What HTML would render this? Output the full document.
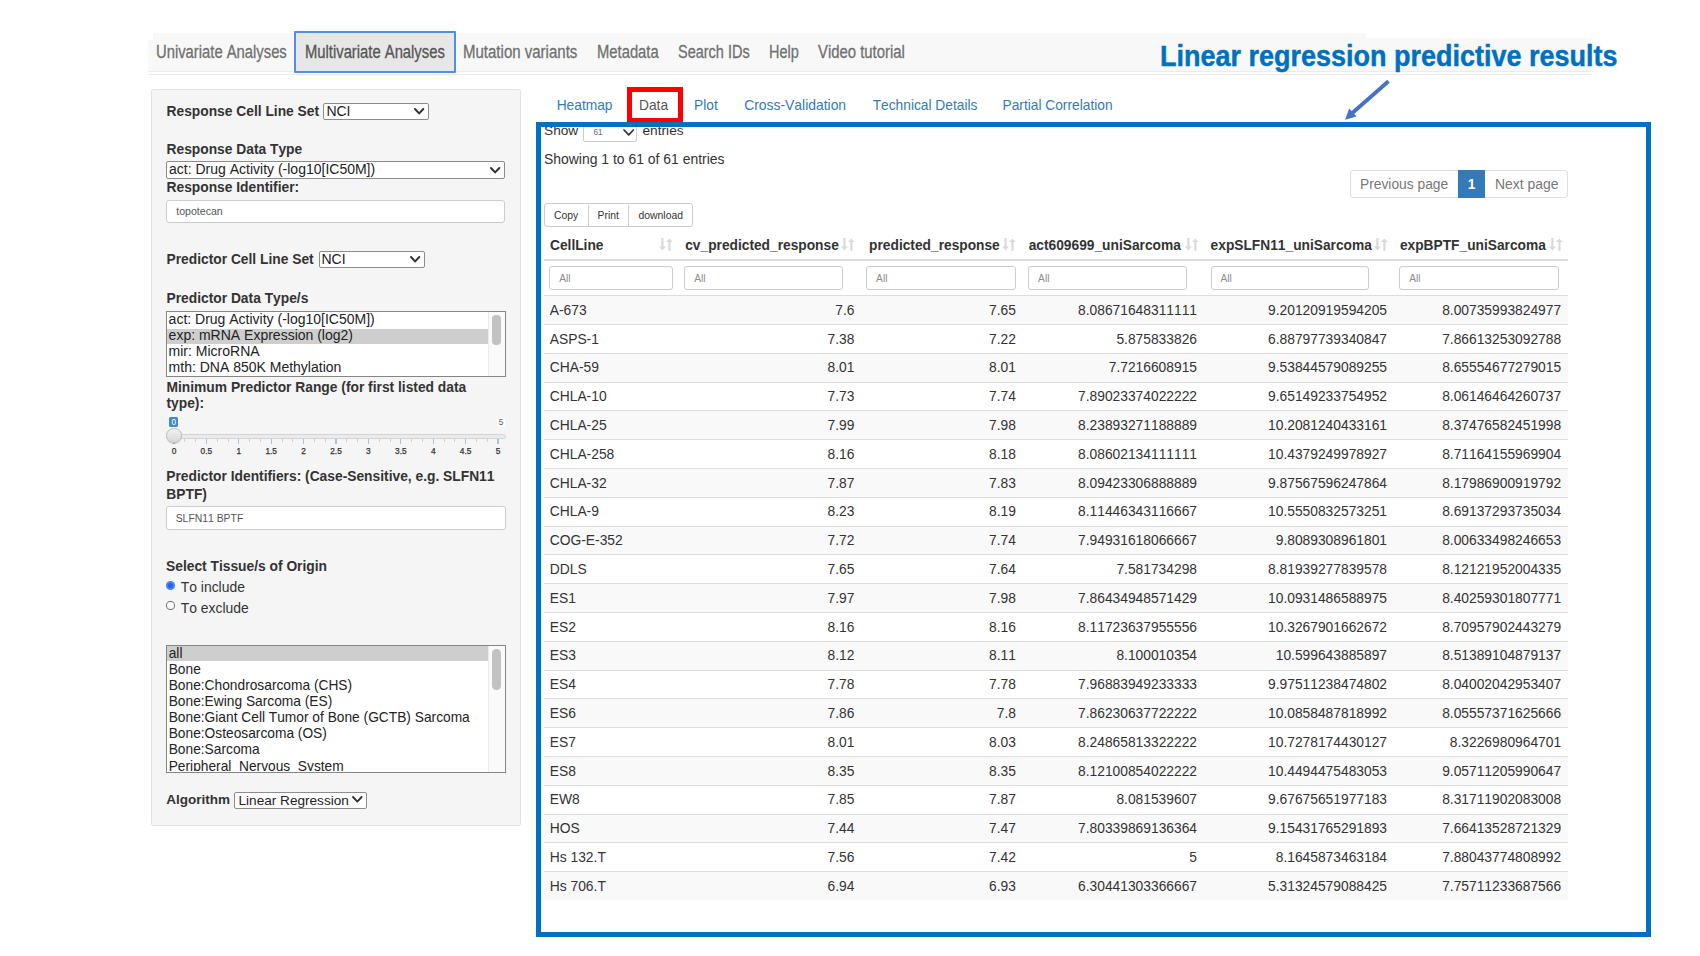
<!DOCTYPE html>
<html><head><meta charset="utf-8"><title>Linear regression predictive results</title>
<style>
html,body{margin:0;padding:0;background:#fff;}
body{width:1700px;height:956px;position:relative;overflow:hidden;font-family:"Liberation Sans",sans-serif;}
.t{position:absolute;white-space:pre;line-height:0;font-family:"Liberation Sans",sans-serif;font-kerning:none;}
.r{position:absolute;}
</style></head><body>
<div class="r" style="left:153.30px;top:33.30px;width:1438.20px;height:37.30px;background:#f8f8f8;"></div>
<div class="r" style="left:148.20px;top:39.60px;width:5.10px;height:31.00px;background:#f8f8f8;"></div>
<div class="r" style="left:148.20px;top:70.60px;width:1443.30px;height:1.40px;background:#ebebeb;"></div>
<div class="r" style="left:148.20px;top:74.00px;width:1443.30px;height:1.20px;background:#e9e9e9;"></div>
<div class="r" style="left:1366.00px;top:32.00px;width:226.00px;height:6.20px;background:#fff;"></div>
<div class="r" style="left:293.50px;top:31.40px;width:162.50px;height:41.20px;background:#e7e7e7;border:2px solid #4f8fe6;box-sizing:border-box;border-radius:1px;"></div>
<div class="t" style="left:156.40px;top:52.00px;font-size:18px;color:#707070;font-weight:400;transform:scaleX(0.822);transform-origin:left;-webkit-text-stroke:0.3px #707070;">Univariate Analyses</div>
<div class="t" style="left:305.30px;top:52.00px;font-size:18px;color:#555;font-weight:400;transform:scaleX(0.822);transform-origin:left;-webkit-text-stroke:0.3px #555;">Multivariate Analyses</div>
<div class="t" style="left:463.40px;top:52.00px;font-size:18px;color:#707070;font-weight:400;transform:scaleX(0.834);transform-origin:left;-webkit-text-stroke:0.3px #707070;">Mutation variants</div>
<div class="t" style="left:596.80px;top:52.00px;font-size:18px;color:#707070;font-weight:400;transform:scaleX(0.822);transform-origin:left;-webkit-text-stroke:0.3px #707070;">Metadata</div>
<div class="t" style="left:678.00px;top:52.00px;font-size:18px;color:#707070;font-weight:400;transform:scaleX(0.805);transform-origin:left;-webkit-text-stroke:0.3px #707070;">Search IDs</div>
<div class="t" style="left:769.40px;top:52.00px;font-size:18px;color:#707070;font-weight:400;transform:scaleX(0.805);transform-origin:left;-webkit-text-stroke:0.3px #707070;">Help</div>
<div class="t" style="left:818.10px;top:52.00px;font-size:18px;color:#707070;font-weight:400;transform:scaleX(0.827);transform-origin:left;-webkit-text-stroke:0.3px #707070;">Video tutorial</div>
<div class="t" style="left:1159.60px;top:56.00px;font-size:29px;color:#0070c0;font-weight:700;transform:scaleX(0.930447467990259);transform-origin:left;-webkit-text-stroke:0.45px #0070c0;">Linear regression predictive results</div>
<svg class="r" style="left:0;top:0" width="1700" height="956"><line x1="1388.5" y1="81.3" x2="1349.5" y2="115.5" stroke="#4472c4" stroke-width="3.8"/><polygon points="1345.1,119.8 1349.2,108.6 1356.6,116.6" fill="#4472c4"/></svg>
<div class="r" style="left:150.50px;top:89.20px;width:370.30px;height:736.80px;background:#f5f5f5;border:1px solid #e1e1e1;box-sizing:border-box;border-radius:2.5px;"></div>
<div class="t" style="left:166.50px;top:112.00px;font-size:13.8px;color:#333;font-weight:700;">Response Cell Line Set</div>
<div class="r" style="left:323.40px;top:103.20px;width:105.70px;height:16.80px;background:#fff;border:1px solid #8c8c8c;box-sizing:border-box;border-radius:2px;"></div>
<div class="t" style="left:326.40px;top:111.00px;font-size:14.0px;color:#222;font-weight:400;">NCI</div>
<svg class="r" style="left:413.15px;top:106.70px" width="12.30" height="8.40"><polyline points="2,2 6.15,6.40 10.30,2" fill="none" stroke="#333" stroke-width="2" stroke-linecap="round" stroke-linejoin="round"/></svg>
<div class="t" style="left:166.50px;top:150.00px;font-size:13.8px;color:#333;font-weight:700;">Response Data Type</div>
<div class="r" style="left:166.20px;top:161.10px;width:339.20px;height:17.80px;background:#fff;border:1px solid #8c8c8c;box-sizing:border-box;border-radius:2px;"></div>
<div class="t" style="left:169.00px;top:169.00px;font-size:14.0px;color:#222;font-weight:400;">act: Drug Activity (-log10[IC50M])</div>
<svg class="r" style="left:489.25px;top:165.80px" width="12.30" height="8.40"><polyline points="2,2 6.15,6.40 10.30,2" fill="none" stroke="#333" stroke-width="2" stroke-linecap="round" stroke-linejoin="round"/></svg>
<div class="t" style="left:166.50px;top:188.00px;font-size:13.8px;color:#333;font-weight:700;">Response Identifier:</div>
<div class="r" style="left:166.20px;top:200.10px;width:339.20px;height:22.90px;background:#fff;border:1px solid #ccc;box-sizing:border-box;border-radius:3px;"></div>
<div class="t" style="left:176.20px;top:211.00px;font-size:10.6px;color:#555;font-weight:400;">topotecan</div>
<div class="t" style="left:166.50px;top:260.00px;font-size:13.8px;color:#333;font-weight:700;">Predictor Cell Line Set</div>
<div class="r" style="left:318.50px;top:251.30px;width:106.20px;height:17.00px;background:#fff;border:1px solid #8c8c8c;box-sizing:border-box;border-radius:2px;"></div>
<div class="t" style="left:321.50px;top:259.00px;font-size:14.0px;color:#222;font-weight:400;">NCI</div>
<svg class="r" style="left:408.65px;top:254.80px" width="12.30" height="8.40"><polyline points="2,2 6.15,6.40 10.30,2" fill="none" stroke="#333" stroke-width="2" stroke-linecap="round" stroke-linejoin="round"/></svg>
<div class="t" style="left:166.50px;top:299.00px;font-size:13.8px;color:#333;font-weight:700;">Predictor Data Type/s</div>
<div class="r" style="left:166.00px;top:311.00px;width:340.00px;height:66.00px;background:#fff;border:1px solid #858585;box-sizing:border-box;"></div>
<div class="r" style="left:167.00px;top:328.50px;width:321.00px;height:15.20px;background:#cecece;"></div>
<div class="r" style="left:488.00px;top:312.00px;width:17.00px;height:64.00px;background:#fafafa;border-left:1px solid #ebebeb;box-sizing:border-box;"></div>
<div class="r" style="left:492.20px;top:315.00px;width:8.60px;height:29.80px;background:#c2c2c2;border-radius:4px;"></div>
<div class="t" style="left:168.60px;top:319.00px;font-size:14.0px;color:#222;font-weight:400;">act: Drug Activity (-log10[IC50M])</div>
<div class="t" style="left:168.60px;top:335.00px;font-size:14.0px;color:#222;font-weight:400;">exp: mRNA Expression (log2)</div>
<div class="t" style="left:168.60px;top:351.00px;font-size:14.0px;color:#222;font-weight:400;">mir: MicroRNA</div>
<div class="t" style="left:168.60px;top:367.00px;font-size:14.0px;color:#222;font-weight:400;">mth: DNA 850K Methylation</div>
<div class="t" style="left:166.50px;top:388.00px;font-size:13.8px;color:#333;font-weight:700;">Minimum Predictor Range (for first listed data</div>
<div class="t" style="left:166.50px;top:404.00px;font-size:13.8px;color:#333;font-weight:700;">type):</div>
<div class="r" style="left:169.30px;top:416.60px;width:9.00px;height:10.00px;background:#428bca;border-radius:1.5px;"></div>
<div class="t" style="left:169.30px;top:423.00px;font-size:8.2px;color:#fff;font-weight:400;width:9px;text-align:center;">0</div>
<div class="r" style="left:497.00px;top:417.50px;width:8.30px;height:9.50px;background:#fff;border-radius:1.5px;"></div>
<div class="t" style="left:497.00px;top:423.00px;font-size:8.2px;color:#555;font-weight:400;width:8.3px;text-align:center;">5</div>
<div class="r" style="left:166.50px;top:434.10px;width:339.00px;height:4.70px;background:#ebebeb;border:1px solid #d4d4d4;box-sizing:border-box;border-radius:3px;"></div>
<div class="r" style="left:173.40px;top:438.60px;width:1.20px;height:5.20px;background:#a9c2da;"></div>
<div class="r" style="left:184.30px;top:438.60px;width:1.00px;height:3.00px;background:#cfcfcf;"></div>
<div class="r" style="left:195.10px;top:438.60px;width:1.00px;height:3.00px;background:#cfcfcf;"></div>
<div class="r" style="left:205.80px;top:438.60px;width:1.20px;height:5.20px;background:#a9c2da;"></div>
<div class="r" style="left:216.70px;top:438.60px;width:1.00px;height:3.00px;background:#cfcfcf;"></div>
<div class="r" style="left:227.50px;top:438.60px;width:1.00px;height:3.00px;background:#cfcfcf;"></div>
<div class="r" style="left:238.20px;top:438.60px;width:1.20px;height:5.20px;background:#a9c2da;"></div>
<div class="r" style="left:249.10px;top:438.60px;width:1.00px;height:3.00px;background:#cfcfcf;"></div>
<div class="r" style="left:259.90px;top:438.60px;width:1.00px;height:3.00px;background:#cfcfcf;"></div>
<div class="r" style="left:270.60px;top:438.60px;width:1.20px;height:5.20px;background:#a9c2da;"></div>
<div class="r" style="left:281.50px;top:438.60px;width:1.00px;height:3.00px;background:#cfcfcf;"></div>
<div class="r" style="left:292.30px;top:438.60px;width:1.00px;height:3.00px;background:#cfcfcf;"></div>
<div class="r" style="left:303.00px;top:438.60px;width:1.20px;height:5.20px;background:#a9c2da;"></div>
<div class="r" style="left:313.90px;top:438.60px;width:1.00px;height:3.00px;background:#cfcfcf;"></div>
<div class="r" style="left:324.70px;top:438.60px;width:1.00px;height:3.00px;background:#cfcfcf;"></div>
<div class="r" style="left:335.40px;top:438.60px;width:1.20px;height:5.20px;background:#a9c2da;"></div>
<div class="r" style="left:346.30px;top:438.60px;width:1.00px;height:3.00px;background:#cfcfcf;"></div>
<div class="r" style="left:357.10px;top:438.60px;width:1.00px;height:3.00px;background:#cfcfcf;"></div>
<div class="r" style="left:367.80px;top:438.60px;width:1.20px;height:5.20px;background:#a9c2da;"></div>
<div class="r" style="left:378.70px;top:438.60px;width:1.00px;height:3.00px;background:#cfcfcf;"></div>
<div class="r" style="left:389.50px;top:438.60px;width:1.00px;height:3.00px;background:#cfcfcf;"></div>
<div class="r" style="left:400.20px;top:438.60px;width:1.20px;height:5.20px;background:#a9c2da;"></div>
<div class="r" style="left:411.10px;top:438.60px;width:1.00px;height:3.00px;background:#cfcfcf;"></div>
<div class="r" style="left:421.90px;top:438.60px;width:1.00px;height:3.00px;background:#cfcfcf;"></div>
<div class="r" style="left:432.60px;top:438.60px;width:1.20px;height:5.20px;background:#a9c2da;"></div>
<div class="r" style="left:443.50px;top:438.60px;width:1.00px;height:3.00px;background:#cfcfcf;"></div>
<div class="r" style="left:454.30px;top:438.60px;width:1.00px;height:3.00px;background:#cfcfcf;"></div>
<div class="r" style="left:465.00px;top:438.60px;width:1.20px;height:5.20px;background:#a9c2da;"></div>
<div class="r" style="left:475.90px;top:438.60px;width:1.00px;height:3.00px;background:#cfcfcf;"></div>
<div class="r" style="left:486.70px;top:438.60px;width:1.00px;height:3.00px;background:#cfcfcf;"></div>
<div class="r" style="left:497.40px;top:438.60px;width:1.20px;height:5.20px;background:#a9c2da;"></div>
<div class="t" style="left:159.00px;top:451.00px;font-size:8.3px;color:#333;font-weight:400;width:30px;text-align:center;-webkit-text-stroke:0.25px #333;">0</div>
<div class="t" style="left:191.40px;top:451.00px;font-size:8.3px;color:#333;font-weight:400;width:30px;text-align:center;-webkit-text-stroke:0.25px #333;">0.5</div>
<div class="t" style="left:223.80px;top:451.00px;font-size:8.3px;color:#333;font-weight:400;width:30px;text-align:center;-webkit-text-stroke:0.25px #333;">1</div>
<div class="t" style="left:256.20px;top:451.00px;font-size:8.3px;color:#333;font-weight:400;width:30px;text-align:center;-webkit-text-stroke:0.25px #333;">1.5</div>
<div class="t" style="left:288.60px;top:451.00px;font-size:8.3px;color:#333;font-weight:400;width:30px;text-align:center;-webkit-text-stroke:0.25px #333;">2</div>
<div class="t" style="left:321.00px;top:451.00px;font-size:8.3px;color:#333;font-weight:400;width:30px;text-align:center;-webkit-text-stroke:0.25px #333;">2.5</div>
<div class="t" style="left:353.40px;top:451.00px;font-size:8.3px;color:#333;font-weight:400;width:30px;text-align:center;-webkit-text-stroke:0.25px #333;">3</div>
<div class="t" style="left:385.80px;top:451.00px;font-size:8.3px;color:#333;font-weight:400;width:30px;text-align:center;-webkit-text-stroke:0.25px #333;">3.5</div>
<div class="t" style="left:418.20px;top:451.00px;font-size:8.3px;color:#333;font-weight:400;width:30px;text-align:center;-webkit-text-stroke:0.25px #333;">4</div>
<div class="t" style="left:450.60px;top:451.00px;font-size:8.3px;color:#333;font-weight:400;width:30px;text-align:center;-webkit-text-stroke:0.25px #333;">4.5</div>
<div class="t" style="left:483.00px;top:451.00px;font-size:8.3px;color:#333;font-weight:400;width:30px;text-align:center;-webkit-text-stroke:0.25px #333;">5</div>
<div class="r" style="left:166.00px;top:427.50px;width:15.80px;height:15.80px;background:linear-gradient(#f2f2f2,#d8d8d8);border:1px solid #bdbdbd;box-sizing:border-box;border-radius:50%;box-shadow:0 1px 1px rgba(0,0,0,.15);"></div>
<div class="t" style="left:166.30px;top:477.00px;font-size:13.8px;color:#333;font-weight:700;">Predictor Identifiers: (Case-Sensitive, e.g. SLFN11</div>
<div class="t" style="left:166.30px;top:495.00px;font-size:13.8px;color:#333;font-weight:700;">BPTF)</div>
<div class="r" style="left:166.30px;top:505.90px;width:339.50px;height:24.20px;background:#fff;border:1px solid #ccc;box-sizing:border-box;border-radius:3px;"></div>
<div class="t" style="left:175.70px;top:519.00px;font-size:10.4px;color:#555;font-weight:400;">SLFN11 BPTF</div>
<div class="t" style="left:166.00px;top:567.00px;font-size:13.8px;color:#333;font-weight:700;">Select Tissue/s of Origin</div>
<div class="r" style="left:166.10px;top:581.10px;width:8.80px;height:8.60px;background:radial-gradient(circle,#2a64e6 0 2.2px,#4a86f2 3.2px);border-radius:50%;"></div>
<div class="r" style="left:166.10px;top:601.40px;width:8.80px;height:8.50px;background:#fafafa;border:1.2px solid #707070;box-sizing:border-box;border-radius:50%;"></div>
<div class="t" style="left:180.80px;top:587.00px;font-size:13.9px;color:#333;font-weight:400;">To include</div>
<div class="t" style="left:180.80px;top:608.00px;font-size:13.9px;color:#333;font-weight:400;">To exclude</div>
<div class="r" style="left:166.00px;top:645.00px;width:340.00px;height:128.00px;background:#fff;border:1px solid #858585;box-sizing:border-box;"></div>
<div class="r" style="left:167.00px;top:646.00px;width:321.00px;height:15.00px;background:#cecece;"></div>
<div class="r" style="left:488.00px;top:646.00px;width:17.00px;height:126.00px;background:#fafafa;border-left:1px solid #ebebeb;box-sizing:border-box;"></div>
<div class="r" style="left:492.20px;top:648.60px;width:8.60px;height:41.40px;background:#c2c2c2;border-radius:4.3px;"></div>
<div class="r" style="left:167.3px;top:646.2px;width:320px;height:125.3px;overflow:hidden">
<div class="t" style="left:1.4px;top:7.80px;font-size:13.75px;color:#222">all</div>
<div class="t" style="left:1.4px;top:23.80px;font-size:13.75px;color:#222">Bone</div>
<div class="t" style="left:1.4px;top:39.80px;font-size:13.75px;color:#222">Bone:Chondrosarcoma (CHS)</div>
<div class="t" style="left:1.4px;top:55.80px;font-size:13.75px;color:#222">Bone:Ewing Sarcoma (ES)</div>
<div class="t" style="left:1.4px;top:71.80px;font-size:13.75px;color:#222">Bone:Giant Cell Tumor of Bone (GCTB) Sarcoma</div>
<div class="t" style="left:1.4px;top:87.80px;font-size:13.75px;color:#222">Bone:Osteosarcoma (OS)</div>
<div class="t" style="left:1.4px;top:103.80px;font-size:13.75px;color:#222">Bone:Sarcoma</div>
<div class="t" style="left:1.4px;top:120.80px;font-size:13.75px;color:#222">Peripheral_Nervous_System</div>
</div>
<div class="t" style="left:166.20px;top:800.00px;font-size:13.5px;color:#333;font-weight:700;">Algorithm</div>
<div class="r" style="left:234.20px;top:791.50px;width:132.80px;height:17.00px;background:#fff;border:1px solid #8c8c8c;box-sizing:border-box;border-radius:2px;"></div>
<div class="t" style="left:238.50px;top:801.00px;font-size:13.6px;color:#222;font-weight:400;">Linear Regression</div>
<svg class="r" style="left:350.80px;top:795.30px" width="12.60" height="8.60"><polyline points="2,2 6.30,6.60 10.60,2" fill="none" stroke="#333" stroke-width="1.9" stroke-linecap="round" stroke-linejoin="round"/></svg>
<div class="t" style="left:556.70px;top:106.00px;font-size:13.75px;color:#337ab7;font-weight:400;">Heatmap</div>
<div class="t" style="left:639.00px;top:106.00px;font-size:13.75px;color:#555;font-weight:400;">Data</div>
<div class="t" style="left:694.10px;top:106.00px;font-size:13.75px;color:#337ab7;font-weight:400;">Plot</div>
<div class="t" style="left:744.20px;top:105.00px;font-size:13.9px;color:#337ab7;font-weight:400;">Cross-Validation</div>
<div class="t" style="left:872.70px;top:106.00px;font-size:13.75px;color:#337ab7;font-weight:400;">Technical Details</div>
<div class="t" style="left:1002.50px;top:106.00px;font-size:13.75px;color:#337ab7;font-weight:400;">Partial Correlation</div>
<div class="t" style="left:544.00px;top:131.00px;font-size:13.7px;color:#333;font-weight:400;">Show</div>
<div class="r" style="left:583.30px;top:124.00px;width:54.10px;height:18.20px;background:#fff;border:1px solid #ccc;box-sizing:border-box;border-radius:2px;"></div>
<div class="t" style="left:593.40px;top:133.00px;font-size:8.2px;color:#666;font-weight:400;">61</div>
<svg class="r" style="left:621.50px;top:128.30px" width="13.40" height="8.80"><polyline points="2,2 6.70,6.80 11.40,2" fill="none" stroke="#333" stroke-width="1.7" stroke-linecap="round" stroke-linejoin="round"/></svg>
<div class="t" style="left:642.50px;top:131.00px;font-size:13.7px;color:#333;font-weight:400;">entries</div>
<div class="r" style="left:627.30px;top:86.80px;width:55.50px;height:35.80px;border:5px solid #f00;box-sizing:border-box;"></div>
<div class="t" style="left:544.00px;top:159.00px;font-size:13.95px;color:#333;font-weight:400;">Showing 1 to 61 of 61 entries</div>
<div class="r" style="left:1349.90px;top:170.40px;width:218.50px;height:27.30px;background:#fff;border:1px solid #ddd;box-sizing:border-box;border-radius:3px;"></div>
<div class="r" style="left:1457.60px;top:170.20px;width:27.80px;height:27.60px;background:#337ab7;"></div>
<div class="t" style="left:1360.00px;top:185.00px;font-size:13.8px;color:#777;font-weight:400;">Previous page</div>
<div class="t" style="left:1457.60px;top:185.00px;font-size:13.8px;color:#fff;font-weight:700;width:27.8px;text-align:center;">1</div>
<div class="t" style="left:1495.00px;top:184.00px;font-size:13.95px;color:#777;font-weight:400;">Next page</div>
<div class="r" style="left:544.20px;top:203.30px;width:149.20px;height:23.70px;background:#fff;border:1px solid #ccc;box-sizing:border-box;border-radius:3px;"></div>
<div class="r" style="left:587.60px;top:204.50px;width:1.20px;height:21.50px;background:#ccc;"></div>
<div class="r" style="left:628.00px;top:204.50px;width:1.20px;height:21.50px;background:#ccc;"></div>
<div class="t" style="left:554.00px;top:216.00px;font-size:10.4px;color:#333;font-weight:400;">Copy</div>
<div class="t" style="left:597.50px;top:216.00px;font-size:10.4px;color:#333;font-weight:400;">Print</div>
<div class="t" style="left:638.50px;top:216.00px;font-size:10.4px;color:#333;font-weight:400;">download</div>
<div class="t" style="left:550.00px;top:246.00px;font-size:13.75px;color:#333;font-weight:700;">CellLine</div>
<svg class="r" style="left:658.60px;top:236px" width="14" height="17"><g fill="#dadada"><rect x="2.3" y="2" width="2.2" height="10.5"/><polygon points="0,10.5 6.8,10.5 3.4,14.6"/><rect x="9.3" y="5.2" width="2.2" height="9.6"/><polygon points="6.9,6.1 13.9,6.1 10.4,2.4"/></g></svg>
<div class="r" style="left:549.30px;top:266.10px;width:123.30px;height:23.90px;background:#fff;border:1px solid #ccc;box-sizing:border-box;border-radius:3px;"></div>
<div class="t" style="left:559.20px;top:279.00px;font-size:10.2px;color:#8c8c8c;font-weight:400;">All</div>
<div class="t" style="left:685.20px;top:246.00px;font-size:13.75px;color:#333;font-weight:700;">cv_predicted_response</div>
<svg class="r" style="left:840.70px;top:236px" width="14" height="17"><g fill="#dadada"><rect x="2.3" y="2" width="2.2" height="10.5"/><polygon points="0,10.5 6.8,10.5 3.4,14.6"/><rect x="9.3" y="5.2" width="2.2" height="9.6"/><polygon points="6.9,6.1 13.9,6.1 10.4,2.4"/></g></svg>
<div class="r" style="left:684.30px;top:266.10px;width:158.80px;height:23.90px;background:#fff;border:1px solid #ccc;box-sizing:border-box;border-radius:3px;"></div>
<div class="t" style="left:694.20px;top:279.00px;font-size:10.2px;color:#8c8c8c;font-weight:400;">All</div>
<div class="t" style="left:869.10px;top:246.00px;font-size:13.75px;color:#333;font-weight:700;">predicted_response</div>
<svg class="r" style="left:1002.40px;top:236px" width="14" height="17"><g fill="#dadada"><rect x="2.3" y="2" width="2.2" height="10.5"/><polygon points="0,10.5 6.8,10.5 3.4,14.6"/><rect x="9.3" y="5.2" width="2.2" height="9.6"/><polygon points="6.9,6.1 13.9,6.1 10.4,2.4"/></g></svg>
<div class="r" style="left:866.20px;top:266.10px;width:150.30px;height:23.90px;background:#fff;border:1px solid #ccc;box-sizing:border-box;border-radius:3px;"></div>
<div class="t" style="left:876.10px;top:279.00px;font-size:10.2px;color:#8c8c8c;font-weight:400;">All</div>
<div class="t" style="left:1028.70px;top:246.00px;font-size:13.75px;color:#333;font-weight:700;">act609699_uniSarcoma</div>
<svg class="r" style="left:1184.60px;top:236px" width="14" height="17"><g fill="#dadada"><rect x="2.3" y="2" width="2.2" height="10.5"/><polygon points="0,10.5 6.8,10.5 3.4,14.6"/><rect x="9.3" y="5.2" width="2.2" height="9.6"/><polygon points="6.9,6.1 13.9,6.1 10.4,2.4"/></g></svg>
<div class="r" style="left:1028.20px;top:266.10px;width:158.40px;height:23.90px;background:#fff;border:1px solid #ccc;box-sizing:border-box;border-radius:3px;"></div>
<div class="t" style="left:1038.10px;top:279.00px;font-size:10.2px;color:#8c8c8c;font-weight:400;">All</div>
<div class="t" style="left:1210.60px;top:246.00px;font-size:13.75px;color:#333;font-weight:700;">expSLFN11_uniSarcoma</div>
<svg class="r" style="left:1374.40px;top:236px" width="14" height="17"><g fill="#dadada"><rect x="2.3" y="2" width="2.2" height="10.5"/><polygon points="0,10.5 6.8,10.5 3.4,14.6"/><rect x="9.3" y="5.2" width="2.2" height="9.6"/><polygon points="6.9,6.1 13.9,6.1 10.4,2.4"/></g></svg>
<div class="r" style="left:1210.60px;top:266.10px;width:158.10px;height:23.90px;background:#fff;border:1px solid #ccc;box-sizing:border-box;border-radius:3px;"></div>
<div class="t" style="left:1220.50px;top:279.00px;font-size:10.2px;color:#8c8c8c;font-weight:400;">All</div>
<div class="t" style="left:1399.90px;top:246.00px;font-size:13.75px;color:#333;font-weight:700;">expBPTF_uniSarcoma</div>
<svg class="r" style="left:1548.60px;top:236px" width="14" height="17"><g fill="#dadada"><rect x="2.3" y="2" width="2.2" height="10.5"/><polygon points="0,10.5 6.8,10.5 3.4,14.6"/><rect x="9.3" y="5.2" width="2.2" height="9.6"/><polygon points="6.9,6.1 13.9,6.1 10.4,2.4"/></g></svg>
<div class="r" style="left:1399.40px;top:266.10px;width:159.20px;height:23.90px;background:#fff;border:1px solid #ccc;box-sizing:border-box;border-radius:3px;"></div>
<div class="t" style="left:1409.30px;top:279.00px;font-size:10.2px;color:#8c8c8c;font-weight:400;">All</div>
<div class="r" style="left:544.00px;top:259.20px;width:1024.00px;height:1.80px;background:#ddd;"></div>
<div class="r" style="left:544.00px;top:296.00px;width:1024.00px;height:28.00px;background:#f9f9f9;"></div>
<div class="r" style="left:544.00px;top:295.00px;width:1024.00px;height:1.00px;background:#ddd;"></div>
<div class="t" style="left:549.70px;top:310.00px;font-size:13.85px;color:#333;font-weight:400;">A-673</div>
<div class="t" style="right:845.60px;top:311.00px;font-size:13.8px;color:#333;font-weight:400;">7.6</div>
<div class="t" style="right:684.10px;top:311.00px;font-size:13.8px;color:#333;font-weight:400;">7.65</div>
<div class="t" style="right:503.00px;top:311.00px;font-size:13.8px;color:#333;font-weight:400;">8.08671648311111</div>
<div class="t" style="right:313.00px;top:311.00px;font-size:13.8px;color:#333;font-weight:400;">9.20120919594205</div>
<div class="t" style="right:138.90px;top:311.00px;font-size:13.8px;color:#333;font-weight:400;">8.00735993824977</div>
<div class="r" style="left:544.00px;top:324.00px;width:1024.00px;height:1.00px;background:#ddd;"></div>
<div class="t" style="left:549.70px;top:339.00px;font-size:13.85px;color:#333;font-weight:400;">ASPS-1</div>
<div class="t" style="right:845.60px;top:340.00px;font-size:13.8px;color:#333;font-weight:400;">7.38</div>
<div class="t" style="right:684.10px;top:340.00px;font-size:13.8px;color:#333;font-weight:400;">7.22</div>
<div class="t" style="right:503.00px;top:340.00px;font-size:13.8px;color:#333;font-weight:400;">5.875833826</div>
<div class="t" style="right:313.00px;top:340.00px;font-size:13.8px;color:#333;font-weight:400;">6.88797739340847</div>
<div class="t" style="right:138.90px;top:340.00px;font-size:13.8px;color:#333;font-weight:400;">7.86613253092788</div>
<div class="r" style="left:544.00px;top:354.00px;width:1024.00px;height:28.00px;background:#f9f9f9;"></div>
<div class="r" style="left:544.00px;top:353.00px;width:1024.00px;height:1.00px;background:#ddd;"></div>
<div class="t" style="left:549.70px;top:367.00px;font-size:13.85px;color:#333;font-weight:400;">CHA-59</div>
<div class="t" style="right:845.60px;top:368.00px;font-size:13.8px;color:#333;font-weight:400;">8.01</div>
<div class="t" style="right:684.10px;top:368.00px;font-size:13.8px;color:#333;font-weight:400;">8.01</div>
<div class="t" style="right:503.00px;top:368.00px;font-size:13.8px;color:#333;font-weight:400;">7.7216608915</div>
<div class="t" style="right:313.00px;top:368.00px;font-size:13.8px;color:#333;font-weight:400;">9.53844579089255</div>
<div class="t" style="right:138.90px;top:368.00px;font-size:13.8px;color:#333;font-weight:400;">8.65554677279015</div>
<div class="r" style="left:544.00px;top:382.00px;width:1024.00px;height:1.00px;background:#ddd;"></div>
<div class="t" style="left:549.70px;top:396.00px;font-size:13.85px;color:#333;font-weight:400;">CHLA-10</div>
<div class="t" style="right:845.60px;top:397.00px;font-size:13.8px;color:#333;font-weight:400;">7.73</div>
<div class="t" style="right:684.10px;top:397.00px;font-size:13.8px;color:#333;font-weight:400;">7.74</div>
<div class="t" style="right:503.00px;top:397.00px;font-size:13.8px;color:#333;font-weight:400;">7.89023374022222</div>
<div class="t" style="right:313.00px;top:397.00px;font-size:13.8px;color:#333;font-weight:400;">9.65149233754952</div>
<div class="t" style="right:138.90px;top:397.00px;font-size:13.8px;color:#333;font-weight:400;">8.06146464260737</div>
<div class="r" style="left:544.00px;top:411.00px;width:1024.00px;height:28.00px;background:#f9f9f9;"></div>
<div class="r" style="left:544.00px;top:410.00px;width:1024.00px;height:1.00px;background:#ddd;"></div>
<div class="t" style="left:549.70px;top:425.00px;font-size:13.85px;color:#333;font-weight:400;">CHLA-25</div>
<div class="t" style="right:845.60px;top:426.00px;font-size:13.8px;color:#333;font-weight:400;">7.99</div>
<div class="t" style="right:684.10px;top:426.00px;font-size:13.8px;color:#333;font-weight:400;">7.98</div>
<div class="t" style="right:503.00px;top:426.00px;font-size:13.8px;color:#333;font-weight:400;">8.23893271188889</div>
<div class="t" style="right:313.00px;top:426.00px;font-size:13.8px;color:#333;font-weight:400;">10.2081240433161</div>
<div class="t" style="right:138.90px;top:426.00px;font-size:13.8px;color:#333;font-weight:400;">8.37476582451998</div>
<div class="r" style="left:544.00px;top:439.00px;width:1024.00px;height:1.00px;background:#ddd;"></div>
<div class="t" style="left:549.70px;top:454.00px;font-size:13.85px;color:#333;font-weight:400;">CHLA-258</div>
<div class="t" style="right:845.60px;top:455.00px;font-size:13.8px;color:#333;font-weight:400;">8.16</div>
<div class="t" style="right:684.10px;top:455.00px;font-size:13.8px;color:#333;font-weight:400;">8.18</div>
<div class="t" style="right:503.00px;top:455.00px;font-size:13.8px;color:#333;font-weight:400;">8.08602134111111</div>
<div class="t" style="right:313.00px;top:455.00px;font-size:13.8px;color:#333;font-weight:400;">10.4379249978927</div>
<div class="t" style="right:138.90px;top:455.00px;font-size:13.8px;color:#333;font-weight:400;">8.71164155969904</div>
<div class="r" style="left:544.00px;top:469.00px;width:1024.00px;height:28.00px;background:#f9f9f9;"></div>
<div class="r" style="left:544.00px;top:468.00px;width:1024.00px;height:1.00px;background:#ddd;"></div>
<div class="t" style="left:549.70px;top:483.00px;font-size:13.85px;color:#333;font-weight:400;">CHLA-32</div>
<div class="t" style="right:845.60px;top:484.00px;font-size:13.8px;color:#333;font-weight:400;">7.87</div>
<div class="t" style="right:684.10px;top:484.00px;font-size:13.8px;color:#333;font-weight:400;">7.83</div>
<div class="t" style="right:503.00px;top:484.00px;font-size:13.8px;color:#333;font-weight:400;">8.09423306888889</div>
<div class="t" style="right:313.00px;top:484.00px;font-size:13.8px;color:#333;font-weight:400;">9.87567596247864</div>
<div class="t" style="right:138.90px;top:484.00px;font-size:13.8px;color:#333;font-weight:400;">8.17986900919792</div>
<div class="r" style="left:544.00px;top:497.00px;width:1024.00px;height:1.00px;background:#ddd;"></div>
<div class="t" style="left:549.70px;top:511.00px;font-size:13.85px;color:#333;font-weight:400;">CHLA-9</div>
<div class="t" style="right:845.60px;top:512.00px;font-size:13.8px;color:#333;font-weight:400;">8.23</div>
<div class="t" style="right:684.10px;top:512.00px;font-size:13.8px;color:#333;font-weight:400;">8.19</div>
<div class="t" style="right:503.00px;top:512.00px;font-size:13.8px;color:#333;font-weight:400;">8.11446343116667</div>
<div class="t" style="right:313.00px;top:512.00px;font-size:13.8px;color:#333;font-weight:400;">10.5550832573251</div>
<div class="t" style="right:138.90px;top:512.00px;font-size:13.8px;color:#333;font-weight:400;">8.69137293735034</div>
<div class="r" style="left:544.00px;top:527.00px;width:1024.00px;height:27.00px;background:#f9f9f9;"></div>
<div class="r" style="left:544.00px;top:526.00px;width:1024.00px;height:1.00px;background:#ddd;"></div>
<div class="t" style="left:549.70px;top:540.00px;font-size:13.85px;color:#333;font-weight:400;">COG-E-352</div>
<div class="t" style="right:845.60px;top:541.00px;font-size:13.8px;color:#333;font-weight:400;">7.72</div>
<div class="t" style="right:684.10px;top:541.00px;font-size:13.8px;color:#333;font-weight:400;">7.74</div>
<div class="t" style="right:503.00px;top:541.00px;font-size:13.8px;color:#333;font-weight:400;">7.94931618066667</div>
<div class="t" style="right:313.00px;top:541.00px;font-size:13.8px;color:#333;font-weight:400;">9.8089308961801</div>
<div class="t" style="right:138.90px;top:541.00px;font-size:13.8px;color:#333;font-weight:400;">8.00633498246653</div>
<div class="r" style="left:544.00px;top:554.00px;width:1024.00px;height:1.00px;background:#ddd;"></div>
<div class="t" style="left:549.70px;top:569.00px;font-size:13.85px;color:#333;font-weight:400;">DDLS</div>
<div class="t" style="right:845.60px;top:570.00px;font-size:13.8px;color:#333;font-weight:400;">7.65</div>
<div class="t" style="right:684.10px;top:570.00px;font-size:13.8px;color:#333;font-weight:400;">7.64</div>
<div class="t" style="right:503.00px;top:570.00px;font-size:13.8px;color:#333;font-weight:400;">7.581734298</div>
<div class="t" style="right:313.00px;top:570.00px;font-size:13.8px;color:#333;font-weight:400;">8.81939277839578</div>
<div class="t" style="right:138.90px;top:570.00px;font-size:13.8px;color:#333;font-weight:400;">8.12121952004335</div>
<div class="r" style="left:544.00px;top:584.00px;width:1024.00px;height:28.00px;background:#f9f9f9;"></div>
<div class="r" style="left:544.00px;top:583.00px;width:1024.00px;height:1.00px;background:#ddd;"></div>
<div class="t" style="left:549.70px;top:598.00px;font-size:13.85px;color:#333;font-weight:400;">ES1</div>
<div class="t" style="right:845.60px;top:599.00px;font-size:13.8px;color:#333;font-weight:400;">7.97</div>
<div class="t" style="right:684.10px;top:599.00px;font-size:13.8px;color:#333;font-weight:400;">7.98</div>
<div class="t" style="right:503.00px;top:599.00px;font-size:13.8px;color:#333;font-weight:400;">7.86434948571429</div>
<div class="t" style="right:313.00px;top:599.00px;font-size:13.8px;color:#333;font-weight:400;">10.0931486588975</div>
<div class="t" style="right:138.90px;top:599.00px;font-size:13.8px;color:#333;font-weight:400;">8.40259301807771</div>
<div class="r" style="left:544.00px;top:612.00px;width:1024.00px;height:1.00px;background:#ddd;"></div>
<div class="t" style="left:549.70px;top:627.00px;font-size:13.85px;color:#333;font-weight:400;">ES2</div>
<div class="t" style="right:845.60px;top:628.00px;font-size:13.8px;color:#333;font-weight:400;">8.16</div>
<div class="t" style="right:684.10px;top:628.00px;font-size:13.8px;color:#333;font-weight:400;">8.16</div>
<div class="t" style="right:503.00px;top:628.00px;font-size:13.8px;color:#333;font-weight:400;">8.11723637955556</div>
<div class="t" style="right:313.00px;top:628.00px;font-size:13.8px;color:#333;font-weight:400;">10.3267901662672</div>
<div class="t" style="right:138.90px;top:628.00px;font-size:13.8px;color:#333;font-weight:400;">8.70957902443279</div>
<div class="r" style="left:544.00px;top:642.00px;width:1024.00px;height:28.00px;background:#f9f9f9;"></div>
<div class="r" style="left:544.00px;top:641.00px;width:1024.00px;height:1.00px;background:#ddd;"></div>
<div class="t" style="left:549.70px;top:655.00px;font-size:13.85px;color:#333;font-weight:400;">ES3</div>
<div class="t" style="right:845.60px;top:656.00px;font-size:13.8px;color:#333;font-weight:400;">8.12</div>
<div class="t" style="right:684.10px;top:656.00px;font-size:13.8px;color:#333;font-weight:400;">8.11</div>
<div class="t" style="right:503.00px;top:656.00px;font-size:13.8px;color:#333;font-weight:400;">8.100010354</div>
<div class="t" style="right:313.00px;top:656.00px;font-size:13.8px;color:#333;font-weight:400;">10.599643885897</div>
<div class="t" style="right:138.90px;top:656.00px;font-size:13.8px;color:#333;font-weight:400;">8.51389104879137</div>
<div class="r" style="left:544.00px;top:670.00px;width:1024.00px;height:1.00px;background:#ddd;"></div>
<div class="t" style="left:549.70px;top:684.00px;font-size:13.85px;color:#333;font-weight:400;">ES4</div>
<div class="t" style="right:845.60px;top:685.00px;font-size:13.8px;color:#333;font-weight:400;">7.78</div>
<div class="t" style="right:684.10px;top:685.00px;font-size:13.8px;color:#333;font-weight:400;">7.78</div>
<div class="t" style="right:503.00px;top:685.00px;font-size:13.8px;color:#333;font-weight:400;">7.96883949233333</div>
<div class="t" style="right:313.00px;top:685.00px;font-size:13.8px;color:#333;font-weight:400;">9.97511238474802</div>
<div class="t" style="right:138.90px;top:685.00px;font-size:13.8px;color:#333;font-weight:400;">8.04002042953407</div>
<div class="r" style="left:544.00px;top:699.00px;width:1024.00px;height:28.00px;background:#f9f9f9;"></div>
<div class="r" style="left:544.00px;top:698.00px;width:1024.00px;height:1.00px;background:#ddd;"></div>
<div class="t" style="left:549.70px;top:713.00px;font-size:13.85px;color:#333;font-weight:400;">ES6</div>
<div class="t" style="right:845.60px;top:714.00px;font-size:13.8px;color:#333;font-weight:400;">7.86</div>
<div class="t" style="right:684.10px;top:714.00px;font-size:13.8px;color:#333;font-weight:400;">7.8</div>
<div class="t" style="right:503.00px;top:714.00px;font-size:13.8px;color:#333;font-weight:400;">7.86230637722222</div>
<div class="t" style="right:313.00px;top:714.00px;font-size:13.8px;color:#333;font-weight:400;">10.0858487818992</div>
<div class="t" style="right:138.90px;top:714.00px;font-size:13.8px;color:#333;font-weight:400;">8.05557371625666</div>
<div class="r" style="left:544.00px;top:727.00px;width:1024.00px;height:1.00px;background:#ddd;"></div>
<div class="t" style="left:549.70px;top:742.00px;font-size:13.85px;color:#333;font-weight:400;">ES7</div>
<div class="t" style="right:845.60px;top:743.00px;font-size:13.8px;color:#333;font-weight:400;">8.01</div>
<div class="t" style="right:684.10px;top:743.00px;font-size:13.8px;color:#333;font-weight:400;">8.03</div>
<div class="t" style="right:503.00px;top:743.00px;font-size:13.8px;color:#333;font-weight:400;">8.24865813322222</div>
<div class="t" style="right:313.00px;top:743.00px;font-size:13.8px;color:#333;font-weight:400;">10.7278174430127</div>
<div class="t" style="right:138.90px;top:743.00px;font-size:13.8px;color:#333;font-weight:400;">8.3226980964701</div>
<div class="r" style="left:544.00px;top:757.00px;width:1024.00px;height:28.00px;background:#f9f9f9;"></div>
<div class="r" style="left:544.00px;top:756.00px;width:1024.00px;height:1.00px;background:#ddd;"></div>
<div class="t" style="left:549.70px;top:771.00px;font-size:13.85px;color:#333;font-weight:400;">ES8</div>
<div class="t" style="right:845.60px;top:772.00px;font-size:13.8px;color:#333;font-weight:400;">8.35</div>
<div class="t" style="right:684.10px;top:772.00px;font-size:13.8px;color:#333;font-weight:400;">8.35</div>
<div class="t" style="right:503.00px;top:772.00px;font-size:13.8px;color:#333;font-weight:400;">8.12100854022222</div>
<div class="t" style="right:313.00px;top:772.00px;font-size:13.8px;color:#333;font-weight:400;">10.4494475483053</div>
<div class="t" style="right:138.90px;top:772.00px;font-size:13.8px;color:#333;font-weight:400;">9.05711205990647</div>
<div class="r" style="left:544.00px;top:785.00px;width:1024.00px;height:1.00px;background:#ddd;"></div>
<div class="t" style="left:549.70px;top:799.00px;font-size:13.85px;color:#333;font-weight:400;">EW8</div>
<div class="t" style="right:845.60px;top:800.00px;font-size:13.8px;color:#333;font-weight:400;">7.85</div>
<div class="t" style="right:684.10px;top:800.00px;font-size:13.8px;color:#333;font-weight:400;">7.87</div>
<div class="t" style="right:503.00px;top:800.00px;font-size:13.8px;color:#333;font-weight:400;">8.081539607</div>
<div class="t" style="right:313.00px;top:800.00px;font-size:13.8px;color:#333;font-weight:400;">9.67675651977183</div>
<div class="t" style="right:138.90px;top:800.00px;font-size:13.8px;color:#333;font-weight:400;">8.31711902083008</div>
<div class="r" style="left:544.00px;top:815.00px;width:1024.00px;height:27.00px;background:#f9f9f9;"></div>
<div class="r" style="left:544.00px;top:814.00px;width:1024.00px;height:1.00px;background:#ddd;"></div>
<div class="t" style="left:549.70px;top:828.00px;font-size:13.85px;color:#333;font-weight:400;">HOS</div>
<div class="t" style="right:845.60px;top:829.00px;font-size:13.8px;color:#333;font-weight:400;">7.44</div>
<div class="t" style="right:684.10px;top:829.00px;font-size:13.8px;color:#333;font-weight:400;">7.47</div>
<div class="t" style="right:503.00px;top:829.00px;font-size:13.8px;color:#333;font-weight:400;">7.80339869136364</div>
<div class="t" style="right:313.00px;top:829.00px;font-size:13.8px;color:#333;font-weight:400;">9.15431765291893</div>
<div class="t" style="right:138.90px;top:829.00px;font-size:13.8px;color:#333;font-weight:400;">7.66413528721329</div>
<div class="r" style="left:544.00px;top:842.00px;width:1024.00px;height:1.00px;background:#ddd;"></div>
<div class="t" style="left:549.70px;top:857.00px;font-size:13.85px;color:#333;font-weight:400;">Hs 132.T</div>
<div class="t" style="right:845.60px;top:858.00px;font-size:13.8px;color:#333;font-weight:400;">7.56</div>
<div class="t" style="right:684.10px;top:858.00px;font-size:13.8px;color:#333;font-weight:400;">7.42</div>
<div class="t" style="right:503.00px;top:858.00px;font-size:13.8px;color:#333;font-weight:400;">5</div>
<div class="t" style="right:313.00px;top:858.00px;font-size:13.8px;color:#333;font-weight:400;">8.1645873463184</div>
<div class="t" style="right:138.90px;top:858.00px;font-size:13.8px;color:#333;font-weight:400;">7.88043774808992</div>
<div class="r" style="left:544.00px;top:872.00px;width:1024.00px;height:28.00px;background:#f9f9f9;"></div>
<div class="r" style="left:544.00px;top:871.00px;width:1024.00px;height:1.00px;background:#ddd;"></div>
<div class="t" style="left:549.70px;top:886.00px;font-size:13.85px;color:#333;font-weight:400;">Hs 706.T</div>
<div class="t" style="right:845.60px;top:887.00px;font-size:13.8px;color:#333;font-weight:400;">6.94</div>
<div class="t" style="right:684.10px;top:887.00px;font-size:13.8px;color:#333;font-weight:400;">6.93</div>
<div class="t" style="right:503.00px;top:887.00px;font-size:13.8px;color:#333;font-weight:400;">6.30441303366667</div>
<div class="t" style="right:313.00px;top:887.00px;font-size:13.8px;color:#333;font-weight:400;">5.31324579088425</div>
<div class="t" style="right:138.90px;top:887.00px;font-size:13.8px;color:#333;font-weight:400;">7.75711233687566</div>
<div class="r" style="left:536.20px;top:122.40px;width:1114.80px;height:814.20px;border:5px solid #0070c0;box-sizing:border-box;"></div>
</body></html>
